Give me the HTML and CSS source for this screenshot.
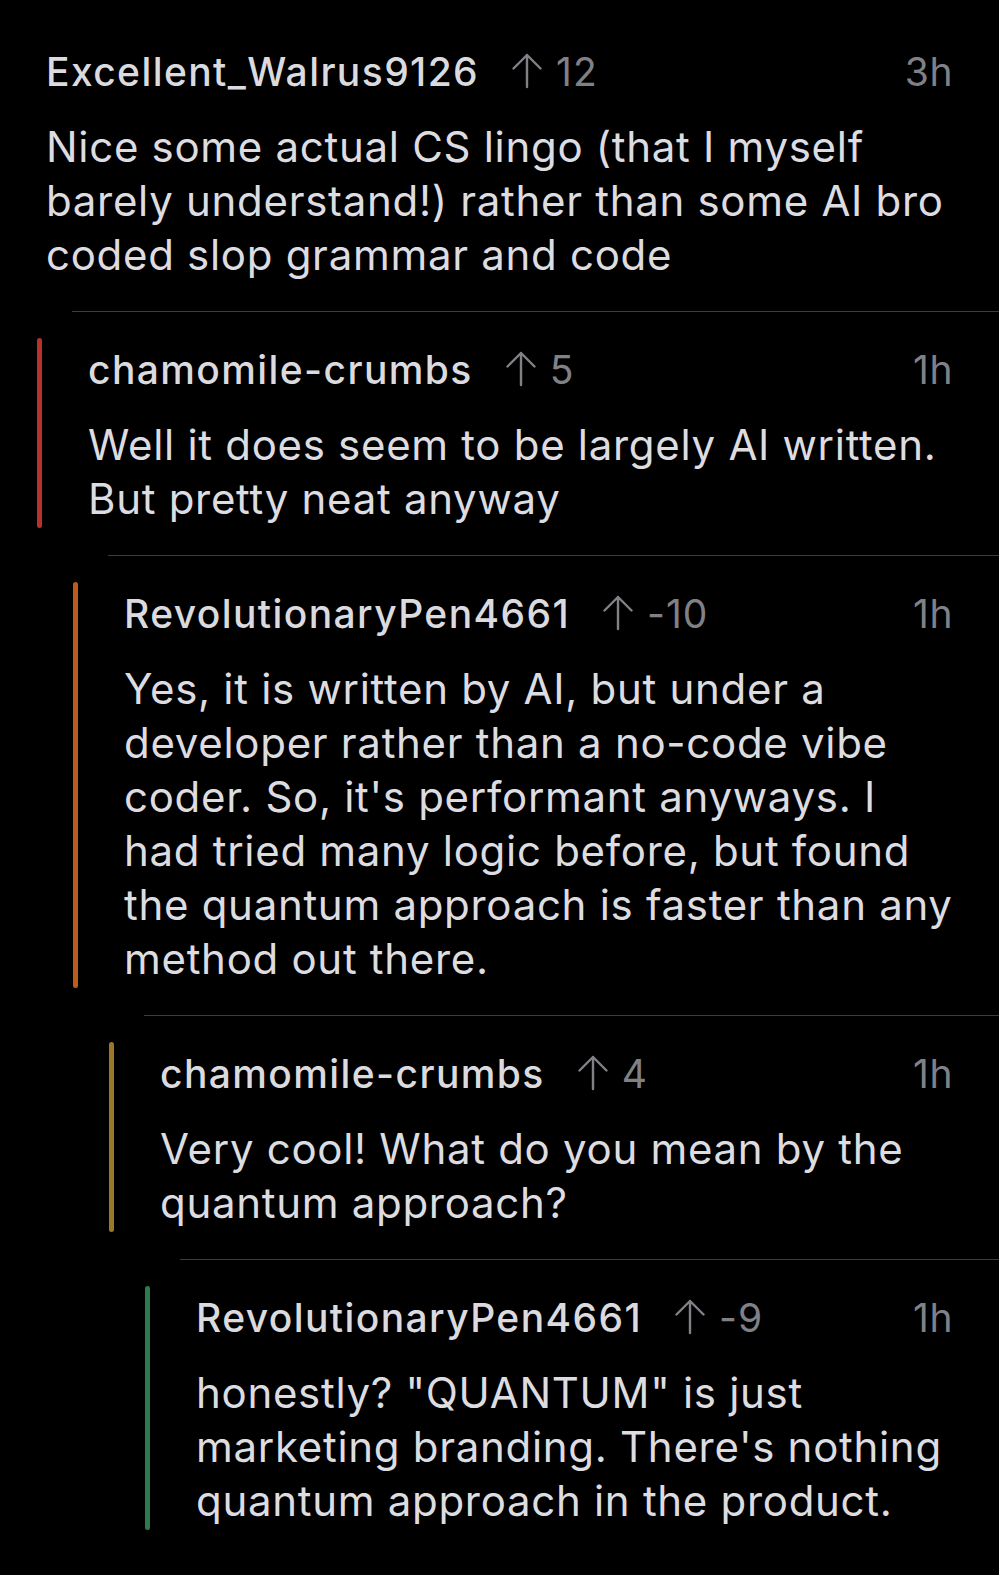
FILE: index.html
```html
<!DOCTYPE html>
<html lang="en">
<head>
<meta charset="utf-8">
<title>Thread</title>
<link rel="stylesheet" href="styles.css">
</head>
<body>
<main class="thread">
  <article class="comment d0">
    <div class="inner">
      <div class="content">
        <header class="meta">
          <span class="author">Excellent_Walrus9126</span>
          <span class="vote"><svg class="arrow" viewBox="0 0 30 36" aria-hidden="true"><path d="M15 34V2M1.5 15.5L15 2l13.5 13.5"/></svg>12</span>
          <span class="time">3h</span>
        </header>
        <p class="text">Nice some actual CS lingo (that I myself barely understand!) rather than some AI bro coded slop grammar and code</p>
      </div>
    </div>
  </article>

  <article class="comment d1">
    <div class="rule"></div>
    <div class="inner">
      <span class="bar red"></span>
      <div class="content">
        <header class="meta">
          <span class="author">chamomile-crumbs</span>
          <span class="vote"><svg class="arrow" viewBox="0 0 30 36" aria-hidden="true"><path d="M15 34V2M1.5 15.5L15 2l13.5 13.5"/></svg>5</span>
          <span class="time">1h</span>
        </header>
        <p class="text">Well it does seem to be largely AI written. But pretty neat anyway</p>
      </div>
    </div>
  </article>

  <article class="comment d2">
    <div class="rule"></div>
    <div class="inner">
      <span class="bar orange"></span>
      <div class="content">
        <header class="meta">
          <span class="author">RevolutionaryPen4661</span>
          <span class="vote"><svg class="arrow" viewBox="0 0 30 36" aria-hidden="true"><path d="M15 34V2M1.5 15.5L15 2l13.5 13.5"/></svg>-10</span>
          <span class="time">1h</span>
        </header>
        <p class="text">Yes, it is written by AI, but under a developer rather than a no-code vibe coder. So, it's performant anyways. I had tried many logic before, but found the quantum approach is faster than any method out there.</p>
      </div>
    </div>
  </article>

  <article class="comment d3">
    <div class="rule"></div>
    <div class="inner">
      <span class="bar gold"></span>
      <div class="content">
        <header class="meta">
          <span class="author">chamomile-crumbs</span>
          <span class="vote"><svg class="arrow" viewBox="0 0 30 36" aria-hidden="true"><path d="M15 34V2M1.5 15.5L15 2l13.5 13.5"/></svg>4</span>
          <span class="time">1h</span>
        </header>
        <p class="text">Very cool! What do you mean by the quantum approach?</p>
      </div>
    </div>
  </article>

  <article class="comment d4">
    <div class="rule"></div>
    <div class="inner">
      <span class="bar green"></span>
      <div class="content">
        <header class="meta">
          <span class="author">RevolutionaryPen4661</span>
          <span class="vote"><svg class="arrow" viewBox="0 0 30 36" aria-hidden="true"><path d="M15 34V2M1.5 15.5L15 2l13.5 13.5"/></svg>-9</span>
          <span class="time">1h</span>
        </header>
        <p class="text">honestly? "QUANTUM" is just marketing branding. There's nothing quantum approach in the product.</p>
      </div>
    </div>
  </article>
</main>
</body>
</html>
```

FILE: styles.css
```css
html, body {
  margin: 0;
  padding: 0;
  background: #000;
}

body {
  font-family: Inter, "Noto Sans", "Liberation Sans", sans-serif;
  color: #dcdce1;
  width: 999px;
  min-height: 1575px;
}

.thread {
  display: flex;
  flex-direction: column;
}

.comment {
  display: flex;
  flex-direction: column;
}

.d1 { margin-left: 36px; }
.d2 { margin-left: 72px; }
.d3 { margin-left: 108px; }
.d4 { margin-left: 144px; }

.rule {
  margin-left: 36px;
  height: 1px;
  background: #3b3b40;
}

.inner {
  display: flex;
  padding-top: 26px;
  padding-bottom: 27px;
}

.d0 .inner {
  padding-top: 40px;
  padding-left: 46px;
}

.bar {
  flex: 0 0 5px;
  width: 5px;
  border-radius: 3px;
  margin-left: 1px;
  margin-right: 46px;
}

.red { background: #b6322b; }
.orange { background: #bd5c19; }
.gold { background: #9b7829; }
.green { background: #2e7a4c; }

.content {
  flex: 1;
  min-width: 0;
  padding-right: 46px;
  padding-bottom: 2px;
}

.meta {
  display: flex;
  align-items: center;
  height: 62px;
  font-size: 39px;
  letter-spacing: 1.4px;
  white-space: nowrap;
}

.author {
  font-weight: 500;
  color: #dadadf;
}

.vote {
  display: flex;
  align-items: center;
  margin-left: 33px;
  color: #808087;
  font-weight: 400;
  letter-spacing: 1px;
}

.arrow {
  width: 30px;
  height: 36px;
  margin-right: 14px;
  fill: none;
  stroke: #808087;
  stroke-width: 2.4;
  stroke-linecap: round;
  stroke-linejoin: round;
}

.time {
  margin-left: auto;
  color: #808087;
  letter-spacing: 0.5px;
}

.text {
  margin: 18px 0 0;
  font-size: 42px;
  letter-spacing: 0.7px;
  line-height: 54px;
  font-weight: 400;
  color: #dcdce1;
}
```
